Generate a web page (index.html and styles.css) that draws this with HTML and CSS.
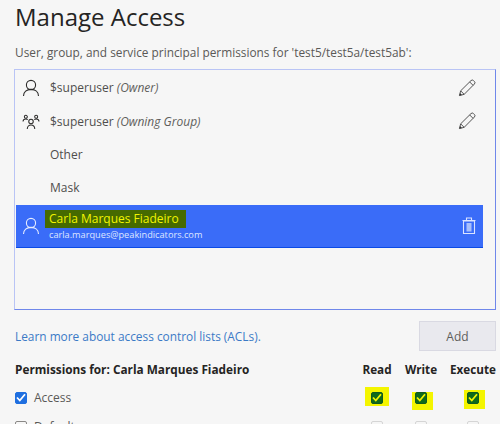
FILE: index.html
```html
<!DOCTYPE html>
<html lang="en">
<head>
<meta charset="utf-8">
<title>Manage Access</title>
<link rel="stylesheet" href="styles.css">
</head>
<body>
<main class="panel">
  <h1 class="title">Manage Access</h1>
  <p class="subtitle">User, group, and service principal permissions for 'test5/test5a/test5ab':</p>
  <div class="list">
    <div class="row">
      <span class="row-icon"><svg width="18" height="18" viewBox="0 0 18 18"><circle cx="9" cy="6" r="4.6"/><path d="M1.500 17c0-4.200 3.200-6.600 7.500-6.600s7.500 2.400 7.500 6.600"/></svg></span>
      <span class="row-name">$superuser <em>(Owner)</em></span>
      <svg class="edit" width="18" height="18" viewBox="0 0 19 19"><path d="M1.500 17.500l1.300-5L13.700 1.700a1.900 1.900 0 0 1 2.700 0l.9.9a1.900 1.900 0 0 1 0 2.700L6.500 16.200z"/><path d="M2.800 12.500l3.700 3.700M12.300 3.100l3.600 3.600"/><path class="tip" d="M1.500 17.500l.7-2.700 2 2z"/></svg>
    </div>
    <div class="row">
      <span class="row-icon"><svg width="18" height="15" viewBox="0 0 18 16"><circle cx="9" cy="8" r="2.400"/><path d="M5 16c0-2.800 1.800-4.300 4-4.300s4 1.500 4 4.300"/><circle cx="3.500" cy="3" r="1.600"/><path d="M.5 8c0-1.800 1.300-2.700 3-2.700 .8 0 1.500.2 2 .6"/><circle cx="14.500" cy="3" r="1.600"/><path d="M17.500 8c0-1.800-1.300-2.700-3-2.700-.8 0-1.500.2-2 .6"/></svg></span>
      <span class="row-name">$superuser <em>(Owning Group)</em></span>
      <svg class="edit" width="18" height="18" viewBox="0 0 19 19"><path d="M1.500 17.500l1.300-5L13.700 1.700a1.900 1.900 0 0 1 2.700 0l.9.9a1.900 1.900 0 0 1 0 2.700L6.500 16.200z"/><path d="M2.800 12.500l3.700 3.700M12.300 3.100l3.600 3.600"/><path class="tip" d="M1.500 17.500l.7-2.700 2 2z"/></svg>
    </div>
    <div class="row"><span class="row-icon"></span><span class="row-name">Other</span></div>
    <div class="row"><span class="row-icon"></span><span class="row-name">Mask</span></div>
    <div class="row row-selected">
      <span class="row-icon"><svg width="18" height="18" viewBox="0 0 18 18"><circle cx="9" cy="6" r="4.600"/><path d="M1.500 17c0-4.200 3.200-6.600 7.500-6.600s7.500 2.400 7.500 6.600"/></svg></span>
      <div class="identity">
        <span class="marked-name">Carla Marques Fiadeiro</span>
        <span class="email">carla.marques@peakindicators.com</span>
      </div>
      <svg class="trash" width="14" height="18" viewBox="0 0 14 18"><path d="M1.500 4h11v12.500h-11z"/><path d="M.5 3.500h13M4.500 3.500V1h5v2.500"/><rect x="4.500" y="6" width="5" height="8.500"/></svg>
    </div>
  </div>
  <div class="actions">
    <a class="learn" href="#">Learn more about access control lists (ACLs).</a>
    <button class="add" type="button">Add</button>
  </div>
  <div class="perm-grid">
    <div class="perm-title">Permissions for: Carla Marques Fiadeiro</div>
    <div class="perm-head">Read</div>
    <div class="perm-head">Write</div>
    <div class="perm-head">Execute</div>

    <label class="perm-label"><span class="box box-checked"><svg width="10" height="9" viewBox="0 0 10 9"><path d="M1 4.500l2.800 3L9 1.200"/></svg></span>Access</label>
    <div class="perm-cell"><span class="glow glow-read"><span class="box box-marked"><svg width="10" height="9" viewBox="0 0 10 9"><path d="M1 4.500l2.800 3L9 1.200"/></svg></span></span></div>
    <div class="perm-cell"><span class="glow glow-write"><span class="box box-marked"><svg width="10" height="9" viewBox="0 0 10 9"><path d="M1 4.500l2.800 3L9 1.200"/></svg></span></span></div>
    <div class="perm-cell"><span class="glow glow-execute"><span class="box box-marked"><svg width="10" height="9" viewBox="0 0 10 9"><path d="M1 4.500l2.800 3L9 1.200"/></svg></span></span></div>

    <label class="perm-label"><span class="box"></span>Default</label>
    <div class="perm-cell"><span class="box box-off"></span></div>
    <div class="perm-cell"><span class="box box-off"></span></div>
    <div class="perm-cell"><span class="box box-off"></span></div>
  </div>
</main>
</body>
</html>
```

FILE: styles.css
```css
html, body {
  margin: 0;
  height: 424px;
  overflow: hidden;
  background: #f6f6f6;
}
body {
  font-family: "Open Sans", "Noto Sans", "Liberation Sans", sans-serif;
  color: #323130;
}
.panel {
  padding: 0 0 0 15px;
}
.title {
  margin: 0;
  font-size: 24px;
  line-height: 33px;
  font-weight: 400;
  color: #252423;
}
.subtitle {
  margin: 10px 0 0;
  font-size: 11.85px;
  line-height: 18px;
  color: #5a5957;
}
.list {
  box-sizing: border-box;
  width: 482px;
  height: 241px;
  margin: 8px 0 0 -1px;
  padding: 1px 12px 0 1px;
  border: 1px solid #6f87ea;
  border-top-color: #b9c4f5;
  border-left-color: #b9c4f5;
}
.row {
  display: flex;
  align-items: center;
  height: 33.4px;
  padding-right: 7px;
}
.row-icon {
  display: flex;
  width: 34px;
  padding-left: 6px;
  box-sizing: border-box;
}
.row-icon svg {
  fill: none;
  stroke: #2b2a29;
  stroke-width: 1.1;
}
.row-name {
  flex: 1;
  font-size: 12px;
  color: #4f4e4d;
}
.row-name em {
  color: #5f5e5c;
}
.edit {
  fill: none;
  stroke: #4a4a4a;
  stroke-width: 1;
}
.edit .tip {
  fill: #333;
  stroke: none;
}
.row-selected {
  height: 43px;
  background: #3a6cf8;
  border-bottom: 1px solid #0a4ae6;
  box-sizing: border-box;
  padding-right: 7px;
}
.row-selected .row-icon svg {
  stroke: #e6edff;
}
.identity {
  flex: 1;
  display: flex;
  flex-direction: column;
  align-items: flex-start;
  margin-left: -1px;
}
.marked-name {
  margin-left: -4px;
  padding: 0 7px 0 4px;
  background: #466a00;
  color: #f2f500;
  font-size: 12px;
  line-height: 18px;
}
.email {
  font-size: 9.2px;
  line-height: 13px;
  color: #dfe6ff;
}
.trash {
  fill: none;
  stroke: #dbe4ff;
  stroke-width: 1.1;
}
.trash rect {
  fill: #a9c0fb;
  stroke: none;
}
.actions {
  display: flex;
  align-items: center;
  justify-content: space-between;
  height: 30px;
  margin-top: 11px;
  padding-right: 4px;
}
.learn {
  font-size: 11.87px;
  color: #3b7ac6;
  text-decoration: none;
}
.add {
  width: 77px;
  height: 30px;
  padding: 0;
  border: 1px solid #d9d9e2;
  background: #e9e9ee;
  font: inherit;
  font-size: 12px;
  color: #5f5e5c;
}
.perm-grid {
  display: grid;
  grid-template-columns: 340px 44px 44px 60px;
  grid-template-rows: 29px 29px 29px;
  margin: 3px -3px 0 0;
  align-items: center;
}
.perm-title {
  font-size: 11.8px;
  font-weight: 700;
  color: #252423;
}
.perm-head {
  font-size: 11.7px;
  font-weight: 700;
  text-align: center;
  color: #252423;
}
.perm-label {
  display: flex;
  align-items: center;
  gap: 7px;
  font-size: 12px;
  color: #5a5957;
}
.perm-cell {
  display: flex;
  justify-content: center;
}
.box {
  box-sizing: border-box;
  display: flex;
  align-items: center;
  justify-content: center;
  width: 12px;
  height: 12px;
  border: 1px solid #8a8886;
  border-radius: 2px;
}
.box svg {
  fill: none;
  stroke: #fff;
  stroke-width: 1.8;
}
.box-checked {
  background: #1f6fe0;
  border-color: #1f6fe0;
}
.box-marked {
  background: #0f6a1a;
  border-color: #0f5a20;
}
.box-marked svg {
  stroke: #f4f500;
}
.box-off {
  border-color: #d5d5d5;
}
.glow {
  display: flex;
  background: #f4f500;
}
.glow-read {
  padding: 5px 6px 2px;
  margin: -5px -6px -2px;
}
.glow-write {
  padding: 0 6px 6px 3px;
  margin: 0 -6px -6px -3px;
}
.glow-execute {
  padding: 2px 6px 5px 3px;
  margin: -2px -6px -5px -3px;
}
```
